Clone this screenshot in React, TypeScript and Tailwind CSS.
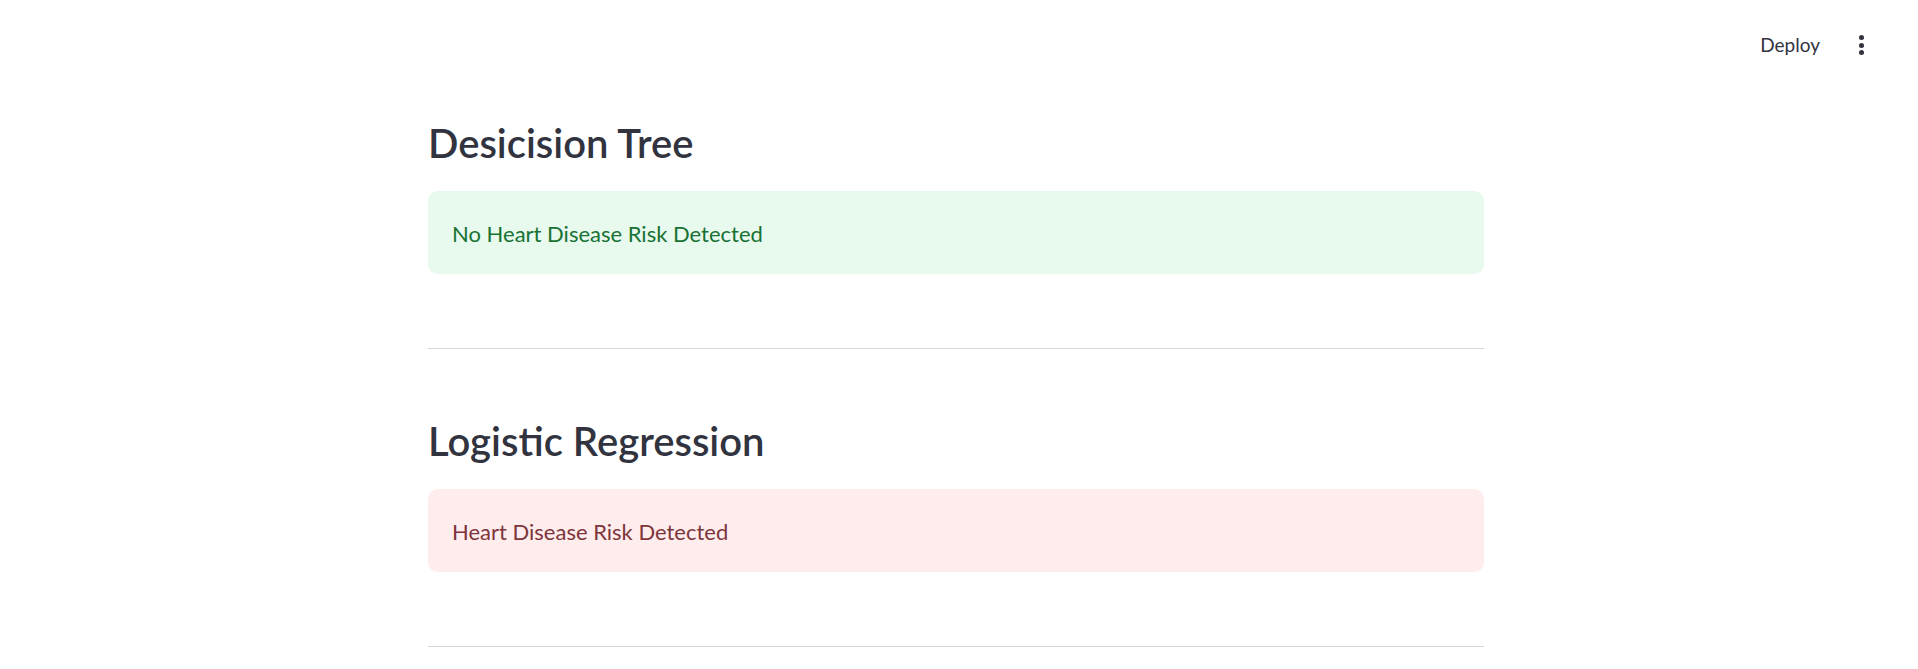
const font = { fontFamily: '"Lato", "Noto Sans", sans-serif' };

function Result({ text, tone }: { text: string; tone: "ok" | "risk" }) {
  const styles =
    tone === "ok" ? "bg-[#e8f9ee] text-[#177233]" : "bg-[#ffecec] text-[#7d353b]";
  return (
    <div className={`flex h-[83px] items-center rounded-[10px] px-[24px] pt-[1px] text-[22px] ${styles}`}>
      {text}
    </div>
  );
}

function Section({ title, result, tone }: { title: string; result: string; tone: "ok" | "risk" }) {
  return (
    <section>
      <h2 className="text-[40px] leading-[52px] font-semibold text-[#31333f]">{title}</h2>
      <div className="mt-[22px]">
        <Result text={result} tone={tone} />
      </div>
      <hr className="mt-[74px] border-t border-[#d6d6d9]" />
    </section>
  );
}

export default function App() {
  return (
    <div className="min-h-screen bg-white text-[#31333f]" style={font}>
      <header className="flex h-[90px] items-center justify-end pr-[50px]">
        <button className="text-[19px] text-[#31333f]">Deploy</button>
        <button className="ml-[35px] flex flex-col items-center gap-[2.5px] px-[4px]">
          <span className="h-[5px] w-[5px] rounded-full bg-[#31333f]" />
          <span className="h-[5px] w-[5px] rounded-full bg-[#31333f]" />
          <span className="h-[5px] w-[5px] rounded-full bg-[#31333f]" />
        </button>
      </header>
      <main className="w-[1056px] ml-[428px] flex flex-col gap-[66px] pt-[27px]">
        <Section title="Desicision Tree" result="No Heart Disease Risk Detected" tone="ok" />
        <Section title="Logistic Regression" result="Heart Disease Risk Detected" tone="risk" />
      </main>
    </div>
  );
}
